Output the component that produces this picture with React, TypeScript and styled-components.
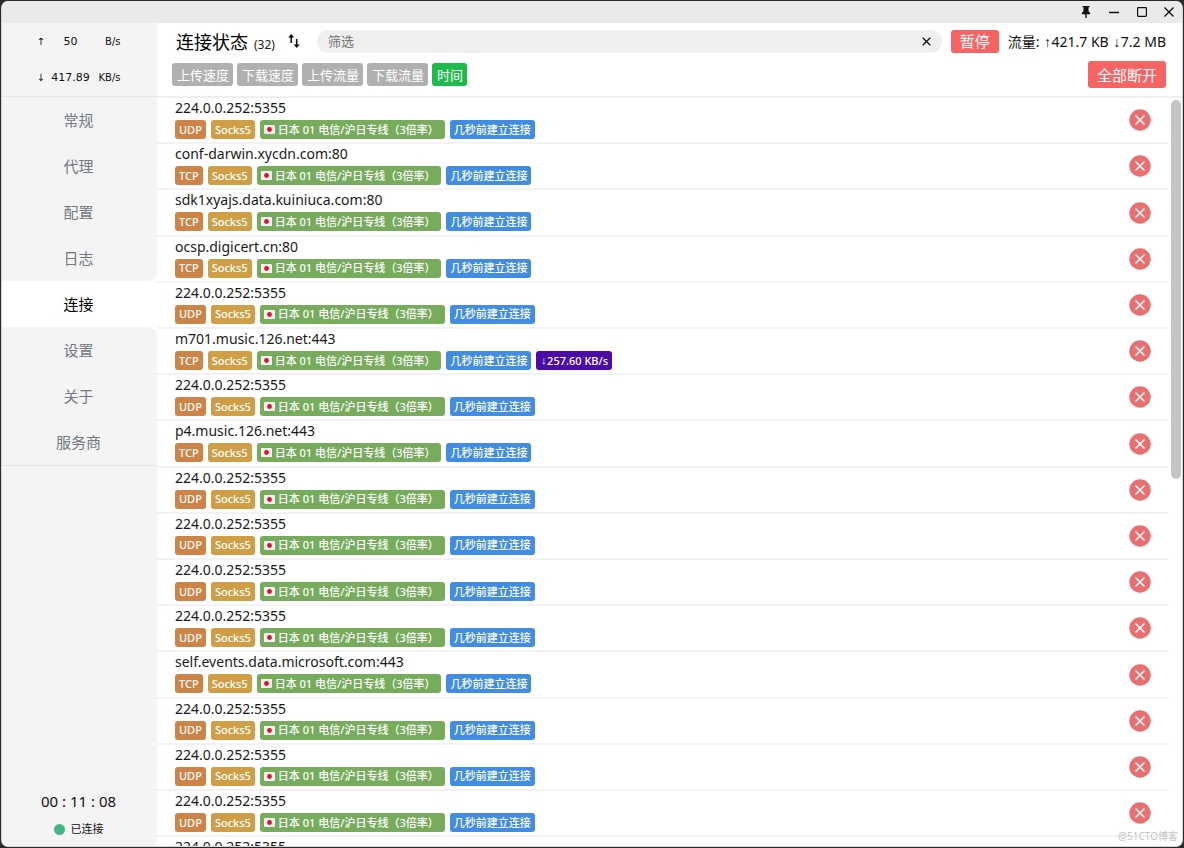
import React from "react";
import styled, { createGlobalStyle } from "styled-components";

const GlobalStyle = createGlobalStyle`
  *, *::before, *::after { box-sizing: border-box; }
  html, body { margin: 0; height: 100%; overflow: hidden; }
  #root { height: 100%; }
  body {
    background: #2a282b;
    color: #111;
    font-family: "Noto Sans", "Noto Sans CJK SC", sans-serif;
  }
  button, input { font-family: inherit; }
`;

const Desktop = styled.div`
  height: 100vh;
  padding: 1px;
`;

const Window = styled.div`
  position: relative;
  display: flex;
  flex-direction: column;
  height: 100%;
  overflow: hidden;
  border: 1px solid #d5d5d5;
  border-top: 0;
  border-radius: 7px;
  background: #fff;
`;

const TitleBar = styled.header`
  display: flex;
  justify-content: flex-end;
  flex: none;
  height: 22px;
  background: #eaeaea;
`;

const WindowButton = styled.button`
  display: flex;
  align-items: center;
  justify-content: center;
  width: 28px;
  height: 22px;
  padding: 0;
  border: 0;
  background: none;
  color: #111;

  &:last-child { width: 26px; }
`;

const Body = styled.div`
  display: flex;
  flex: 1;
  min-height: 0;
`;

const Sidebar = styled.aside`
  display: flex;
  flex-direction: column;
  flex: none;
  width: 155px;
  background: #fff;
`;

const Speeds = styled.div`
  flex: none;
  height: 74px;
  padding-right: 2px;
  border-bottom: 1px solid #e6e6e6;
  background: #f4f4f4;
`;

const SpeedRow = styled.div`
  display: grid;
  grid-template-columns: 8px 52px 24px;
  justify-content: center;
  align-items: center;
  height: 36px;
  font-family: "DejaVu Sans", sans-serif;
  font-size: 11px;
  text-align: center;
  color: #111;
`;

const SpeedArrow = styled.span`
  font-size: 10px;
`;

const SpeedUnit = styled.span`
  font-size: 10px;
  text-align: right;
`;

const Nav = styled.nav`
  display: flex;
  flex-direction: column;
  flex: none;
  background: #fff;
`;

const NavLink = styled.a<{ $active?: boolean; $corner?: "top" | "bottom" }>`
  display: flex;
  align-items: center;
  justify-content: center;
  height: 46px;
  padding: 0 2px 1px 0;
  font-size: 15px;
  text-decoration: none;
  color: ${(p) => (p.$active ? "#000" : "#717a80")};
  background: ${(p) => (p.$active ? "#fff" : "#f4f4f4")};
  border-top-right-radius: ${(p) => (p.$corner === "top" ? "9px" : "0")};
  border-bottom-right-radius: ${(p) => (p.$corner === "bottom" ? "9px" : "0")};
`;

const Status = styled.div`
  display: flex;
  flex-direction: column;
  justify-content: flex-end;
  align-items: center;
  flex: 1;
  gap: 9px;
  padding: 0 2px 8px 0;
  border-top: 1px solid #e4e4e4;
  background: #f4f4f4;
`;

const Timer = styled.div`
  font-size: 15px;
  line-height: 20px;
`;

const Connected = styled.div`
  display: flex;
  align-items: center;
  gap: 6px;
  font-size: 11px;
  line-height: 18px;
`;

const Dot = styled.span`
  width: 11px;
  height: 11px;
  border-radius: 50%;
  background: #41b883;
`;

const Main = styled.main`
  display: flex;
  flex-direction: column;
  flex: 1;
  min-width: 0;
`;

const Toolbar = styled.div`
  display: flex;
  flex-direction: column;
  flex: none;
  height: 75px;
  padding: 6px 16px 0 15px;
  border-bottom: 2px solid #efefef;
`;

const ToolRow = styled.div`
  display: flex;
  align-items: center;
  height: 24px;
`;

const FilterRow = styled(ToolRow)`
  justify-content: space-between;
  margin-top: 8px;
  height: 27px;
`;

const Title = styled.h1`
  display: flex;
  align-items: baseline;
  gap: 6px;
  margin: 0 0 0 4px;
  padding-top: 4px;
  font-size: 18px;
  font-weight: 400;
  line-height: 24px;
  color: #000;
  white-space: nowrap;
`;

const Count = styled.span`
  font-size: 12px;
  color: #222;
`;

const SortButton = styled.button`
  display: flex;
  margin-left: 13px;
  padding: 0;
  border: 0;
  background: none;
  color: #111;
`;

const SearchBox = styled.div`
  display: flex;
  align-items: center;
  flex: 1;
  height: 23px;
  margin-left: 17px;
  padding: 0 11px;
  border-radius: 12px;
  background: #efefef;
`;

const SearchInput = styled.input`
  flex: 1;
  min-width: 0;
  height: 22px;
  padding: 0;
  border: 0;
  outline: 0;
  background: none;
  font-size: 13px;
  color: #111;

  &::placeholder { color: #757575; opacity: 1; }
`;

const ClearButton = styled.button`
  display: flex;
  padding: 0;
  border: 0;
  background: none;
  color: #111;
`;

const DangerButton = styled.button<{ $large?: boolean }>`
  height: ${(p) => (p.$large ? "27px" : "23px")};
  padding: 0 9px;
  border: 0;
  border-radius: 3px;
  background: #f86464;
  color: #fff;
  font-size: 15px;
  line-height: 22px;
  white-space: nowrap;
`;

const Traffic = styled.span`
  margin-left: 9px;
  padding-top: 2px;
  font-size: 14px;
  line-height: 22px;
  white-space: nowrap;
`;

const Arrow = styled.span`
  font-family: "Liberation Mono", monospace;
`;

const PauseSlot = styled.div`
  display: flex;
  margin-left: 9px;
`;

const Filters = styled.div`
  display: flex;
  gap: 4px;
`;

const FilterButton = styled.button<{ $active?: boolean }>`
  height: 23px;
  padding: 0 4px 0 5px;
  border: 0;
  border-radius: 3px;
  background: ${(p) => (p.$active ? "#1fba4b" : "#b0b0b0")};
  color: #fff;
  font-size: 13px;
  line-height: 22px;
`;

const Scroller = styled.div`
  display: flex;
  flex: 1;
  min-height: 0;
  overflow: hidden;
`;

const List = styled.ul`
  display: flex;
  flex-direction: column;
  flex: 1;
  min-height: 105%;
  margin: 0;
  padding: 0;
  list-style: none;
`;

const Item = styled.li`
  display: flex;
  align-items: flex-start;
  justify-content: space-between;
  flex: 1 0 46px;
  padding: 0 18px;
  border-bottom: 2px solid #f3f3f3;
`;

const Host = styled.div`
  font-size: 14px;
  line-height: 20px;
  color: #1a1a1a;
`;

const Tags = styled.div`
  display: flex;
  gap: 5px;
  margin-top: 2px;
`;

const Tag = styled.span<{ $color: string; $wide?: boolean }>`
  display: flex;
  align-items: center;
  height: 19px;
  padding: 0 ${(p) => (p.$wide ? "6px" : "4px")} 0 4px;
  border-radius: 3px;
  background: ${(p) => p.$color};
  color: #fff;
  font-size: 11px;
  font-weight: 500;
  line-height: 18px;
  white-space: nowrap;
`;

const CloseButton = styled.button`
  display: flex;
  align-self: center;
  padding: 0;
  border: 0;
  background: none;
`;

const Track = styled.div`
  flex: none;
  width: 13px;
  padding: 2px 1px 2px 2px;
`;

const Thumb = styled.div`
  height: 51%;
  border-radius: 5px;
  background: #c6c5c5;
`;

const Watermark = styled.span`
  position: absolute;
  right: 4px;
  bottom: 2px;
  font-size: 10px;
  line-height: 16px;
  color: #c4c4c4;
`;

const FlagIcon = styled.svg`
  flex: none;
  margin-right: 3px;
`;

const Flag = () => (
  <FlagIcon width="11" height="9" viewBox="0 0 11 9" aria-hidden="true">
    <rect width="11" height="9" rx="1" fill="#f4f1f1" />
    <circle cx="5.5" cy="4.5" r="2.4" fill="#e0102c" />
  </FlagIcon>
);

const CircleX = () => (
  <svg width="22" height="22" viewBox="0 0 22 22" aria-hidden="true">
    <circle cx="11" cy="11" r="10.7" fill="#ea6f70" />
    <path d="M6.5 6.5l9 9m0-9l-9 9" stroke="#fff" strokeWidth="1.5" />
  </svg>
);

const SortIcon = () => (
  <svg width="12" height="14" viewBox="0 0 12 14" aria-hidden="true" fill="currentColor">
    <path d="M3.2 0L6.2 3.6H4V9H2.4V3.6H.2zM8.7 14L5.6 10.4h2.3V5h1.6v5.4h2.3z" />
  </svg>
);

const NAV = ["常规", "代理", "配置", "日志", "连接", "设置", "关于", "服务商"];
const ACTIVE = NAV.indexOf("连接");

const FILTERS = ["上传速度", "下载速度", "上传流量", "下载流量", "时间"];

interface Connection {
  host: string;
  protocol: "UDP" | "TCP";
  speed?: string;
}

const udp: Connection = { host: "224.0.0.252:5355", protocol: "UDP" };
const tcp = (host: string, speed?: string): Connection => ({ host, protocol: "TCP", speed });

const CONNECTIONS: Connection[] = [
  udp,
  tcp("conf-darwin.xycdn.com:80"),
  tcp("sdk1xyajs.data.kuiniuca.com:80"),
  tcp("ocsp.digicert.cn:80"),
  udp,
  tcp("m701.music.126.net:443", "257.60 KB/s"),
  udp,
  tcp("p4.music.126.net:443"),
  udp,
  udp,
  udp,
  udp,
  tcp("self.events.data.microsoft.com:443"),
  udp,
  udp,
  udp,
  udp,
];

const ConnectionItem = ({ host, protocol, speed }: Connection) => (
  <Item>
    <div>
      <Host>{host}</Host>
      <Tags>
        <Tag $color="#cd8446">{protocol}</Tag>
        <Tag $color="#cf9e45">Socks5</Tag>
        <Tag $color="#76ac5c" $wide>
          <Flag />
          日本 01 电信/沪日专线（3倍率）
        </Tag>
        <Tag $color="#418de3">几秒前建立连接</Tag>
        {speed && (
          <Tag $color="#4a0ba8">
            <Arrow>↓</Arrow>
            {speed}
          </Tag>
        )}
      </Tags>
    </div>
    <CloseButton aria-label="断开">
      <CircleX />
    </CloseButton>
  </Item>
);

export default function App() {
  return (
    <>
      <GlobalStyle />
      <Desktop>
        <Window>
          <TitleBar>
            <WindowButton aria-label="置顶">
              <svg width="10" height="13" viewBox="0 0 10 13" fill="currentColor" aria-hidden="true">
                <path d="M1.5 0h7v1.2h-1v4L9.2 7v1.2H5.7V12H4.3V8.2H.8V7l1.7-1.8v-4h-1z" />
              </svg>
            </WindowButton>
            <WindowButton aria-label="最小化">
              <svg width="10" height="10" viewBox="0 0 10 10" stroke="currentColor" aria-hidden="true">
                <path d="M0 5.5h10" strokeWidth="1.3" />
              </svg>
            </WindowButton>
            <WindowButton aria-label="最大化">
              <svg width="10" height="10" viewBox="0 0 10 10" fill="none" stroke="currentColor" aria-hidden="true">
                <rect x=".6" y=".6" width="8.8" height="8.8" rx=".8" strokeWidth="1.2" />
              </svg>
            </WindowButton>
            <WindowButton aria-label="关闭">
              <svg width="10" height="10" viewBox="0 0 10 10" stroke="currentColor" aria-hidden="true">
                <path d="M.5 .5l9 9m0-9l-9 9" strokeWidth="1.4" />
              </svg>
            </WindowButton>
          </TitleBar>
          <Body>
            <Sidebar>
              <Speeds>
                <SpeedRow>
                  <SpeedArrow>↑</SpeedArrow>
                  <span>50</span>
                  <SpeedUnit>B/s</SpeedUnit>
                </SpeedRow>
                <SpeedRow>
                  <SpeedArrow>↓</SpeedArrow>
                  <span>417.89</span>
                  <SpeedUnit>KB/s</SpeedUnit>
                </SpeedRow>
              </Speeds>
              <Nav>
                {NAV.map((label, i) => (
                  <NavLink
                    key={label}
                    href="#"
                    $active={i === ACTIVE}
                    $corner={i === ACTIVE - 1 ? "bottom" : i === ACTIVE + 1 ? "top" : undefined}
                  >
                    {label}
                  </NavLink>
                ))}
              </Nav>
              <Status>
                <Timer>00 : 11 : 08</Timer>
                <Connected>
                  <Dot />
                  已连接
                </Connected>
              </Status>
            </Sidebar>
            <Main>
              <Toolbar>
                <ToolRow>
                  <Title>
                    连接状态
                    <Count>(32)</Count>
                  </Title>
                  <SortButton aria-label="排序">
                    <SortIcon />
                  </SortButton>
                  <SearchBox>
                    <SearchInput placeholder="筛选" aria-label="筛选" />
                    <ClearButton aria-label="清除">
                      <svg width="9" height="9" viewBox="0 0 9 9" stroke="currentColor" aria-hidden="true">
                        <path d="M.7 .7l7.6 7.6m0-7.6l-7.6 7.6" strokeWidth="1.3" />
                      </svg>
                    </ClearButton>
                  </SearchBox>
                  <PauseSlot>
                    <DangerButton>暂停</DangerButton>
                  </PauseSlot>
                  <Traffic>
                    流量: <Arrow>↑</Arrow>421.7 KB <Arrow>↓</Arrow>7.2 MB
                  </Traffic>
                </ToolRow>
                <FilterRow>
                  <Filters>
                    {FILTERS.map((label) => (
                      <FilterButton key={label} $active={label === "时间"}>
                        {label}
                      </FilterButton>
                    ))}
                  </Filters>
                  <DangerButton $large>全部断开</DangerButton>
                </FilterRow>
              </Toolbar>
              <Scroller>
                <List>
                  {CONNECTIONS.map((c, i) => (
                    <ConnectionItem key={i} {...c} />
                  ))}
                </List>
                <Track>
                  <Thumb />
                </Track>
              </Scroller>
            </Main>
          </Body>
          <Watermark>@51CTO博客</Watermark>
        </Window>
      </Desktop>
    </>
  );
}
